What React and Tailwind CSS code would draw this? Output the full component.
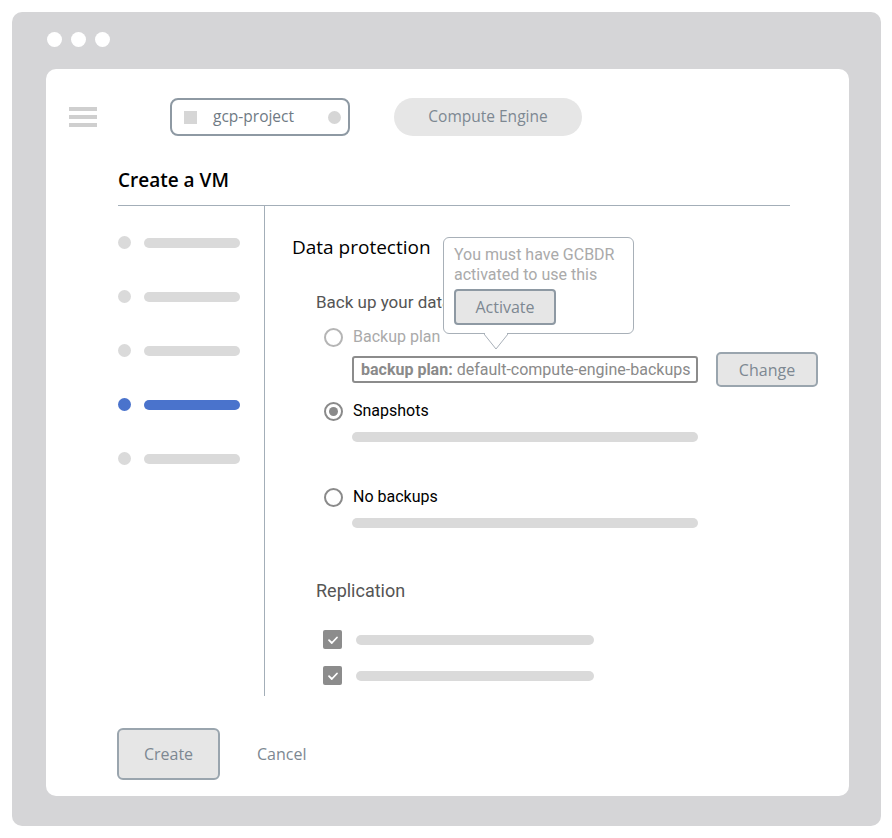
import React from "react";

const G = { fontFamily: "Roboto, 'Liberation Sans', sans-serif" };
const O = { fontFamily: "'Open Sans', Roboto, sans-serif" };

function Radio({ checked, faded }) {
  return (
    <span
      className={`flex h-[19px] w-[19px] items-center justify-center rounded-full border-2 ${
        faded ? "border-[#b5b5b5]" : "border-[#8a8a8a]"
      }`}
    >
      {checked && <span className="h-[9px] w-[9px] rounded-full bg-[#8a8a8a]" />}
    </span>
  );
}

function Check() {
  return (
    <span className="flex h-[19px] w-[19px] items-center justify-center rounded-[2px] bg-[#8c8c8c]">
      <svg width="12" height="12" viewBox="0 0 12 12" fill="none">
        <path d="M2 6.2 L4.8 9 L10 3.5" stroke="white" strokeWidth="1.8" strokeLinecap="round" strokeLinejoin="round" />
      </svg>
    </span>
  );
}

export default function App() {
  const steps = [false, false, false, true, false];
  return (
    <div className="h-[838px] w-[892px] bg-white p-[12px]" style={G}>
      <div className="flex h-[814px] w-[869px] flex-col rounded-[10px] bg-[#d5d5d7]">
        <div className="flex h-[57px] items-center gap-[9px] pl-[35px] pb-[2px]">
          <span className="h-[15px] w-[15px] rounded-full bg-white" />
          <span className="h-[15px] w-[15px] rounded-full bg-white" />
          <span className="h-[15px] w-[15px] rounded-full bg-white" />
        </div>
        <div className="ml-[34px] flex h-[727px] w-[803px] flex-col rounded-[10px] bg-white">
          {/* header */}
          <div className="flex items-center pt-[29px] pl-[23px]">
            <div className="flex w-[28px] flex-col gap-[4px]">
              <span className="h-[4px] bg-[#cfcfcf]" />
              <span className="h-[4px] bg-[#cfcfcf]" />
              <span className="h-[4px] bg-[#cfcfcf]" />
            </div>
            <div className="ml-[73px] flex h-[38px] w-[180px] items-center rounded-[8px] border-2 border-[#8e99a3] pl-[12px] pr-[7px]">
              <span className="h-[13px] w-[13px] bg-[#d6d6d6]" />
              <span className="ml-[16px] text-[15.5px] text-[#6f7a84]" style={O}>gcp-project</span>
              <span className="ml-auto h-[13px] w-[13px] rounded-full bg-[#d6d6d6]" />
            </div>
            <div className="ml-[44px] flex h-[38px] w-[188px] items-center justify-center rounded-full bg-[#e6e6e6] text-[15.5px] text-[#7d8892]" style={O}>
              Compute Engine
            </div>
          </div>
          <div className="ml-[72px] mt-[32px] text-[19px] font-semibold leading-[24px] text-black" style={O}>Create a VM</div>
          <div className="ml-[72px] mt-[13px] h-[1px] w-[672px] bg-[#a3aeb8]" />
          {/* body */}
          <div className="ml-[72px] flex h-[490px]">
            <div className="flex w-[146px] flex-col gap-[41px] pt-[30px]">
              {steps.map((a, i) => (
                <div key={i} className="flex items-center">
                  <span className={`h-[13px] w-[13px] rounded-full ${a ? "bg-[#4a73cc]" : "bg-[#dadada]"}`} />
                  <span className={`ml-[13px] h-[10px] w-[96px] rounded-full ${a ? "bg-[#4a73cc]" : "bg-[#dadada]"}`} />
                </div>
              ))}
            </div>
            <div className="relative flex-1 border-l border-[#a3aeb8] pl-[27px]">
              <div className="mt-[28px] text-[19px] leading-[26px] text-black" style={O}>Data protection</div>
              <div className="ml-[24px] mt-[30px] text-[17px] leading-[24px] text-[#555]">Back up your data</div>
              <div className="ml-[32px] mt-[13px] flex items-center gap-[10px]">
                <Radio faded />
                <span className="text-[16px] leading-[20px] text-[#aaaaaa]">Backup plan</span>
              </div>
              <div className="ml-[60px] mt-[5px] flex items-center">
                <div className="flex h-[27px] w-[346px] items-center rounded-[3px] border-2 border-[#8c8c8c] pl-[7px] text-[16px] text-[#8a8a8a] whitespace-nowrap">
                  <span className="font-bold">backup plan:</span>
                  <span className="ml-[4px]">default-compute-engine-backups</span>
                </div>
                <div className="ml-[18px] flex h-[35px] w-[102px] items-center justify-center rounded-[5px] border-2 border-[#9aa5ae] bg-[#e6e6e6] text-[16px] text-[#7d8892]" style={O}>
                  Change
                </div>
              </div>
              <div className="ml-[32px] mt-[14px] flex items-center gap-[10px]">
                <Radio checked />
                <span className="text-[16px] leading-[20px] text-black">Snapshots</span>
              </div>
              <div className="ml-[60px] mt-[11px] h-[10px] w-[346px] rounded-full bg-[#dadada]" />
              <div className="ml-[32px] mt-[45px] flex items-center gap-[10px]">
                <Radio />
                <span className="text-[16px] leading-[20px] text-black">No backups</span>
              </div>
              <div className="ml-[60px] mt-[11px] h-[10px] w-[346px] rounded-full bg-[#dadada]" />
              <div className="ml-[24px] mt-[51px] text-[18px] leading-[24px] text-[#555]">Replication</div>
              <div className="ml-[31px] mt-[27px] flex items-center">
                <Check />
                <span className="ml-[14px] h-[10px] w-[238px] rounded-full bg-[#dadada]" />
              </div>
              <div className="ml-[31px] mt-[17px] flex items-center">
                <Check />
                <span className="ml-[14px] h-[10px] w-[238px] rounded-full bg-[#dadada]" />
              </div>

              {/* tooltip */}
              <div className="absolute left-[178px] top-[31px] h-[97px] w-[191px] rounded-[6px] border border-[#a8b0b8] bg-white px-[10px] pt-[7px]">
                <div className="text-[16px] leading-[20px] text-[#aaaaaa]">
                  You must have GCBDR
                  <br />
                  activated to use this
                </div>
                <div className="mt-[4px] flex h-[36px] w-[102px] items-center justify-center rounded-[4px] border-2 border-[#8e99a3] bg-[#e6e6e6] text-[16px] text-[#7d8892]" style={O}>
                  Activate
                </div>
                <svg className="absolute left-[40px] top-[95px]" width="24" height="18" viewBox="0 0 24 18">
                  <path d="M0 1 L12 16 L24 1" fill="white" stroke="#a8b0b8" strokeWidth="1" />
                  <rect x="1" y="0" width="22" height="1.5" fill="white" />
                </svg>
              </div>
            </div>
          </div>
          {/* footer */}
          <div className="ml-[71px] mt-[32px] flex items-center">
            <div className="flex h-[52px] w-[103px] items-center justify-center rounded-[6px] border-2 border-[#9aa5ae] bg-[#e6e6e6] text-[16px] text-[#7d8892]" style={O}>
              Create
            </div>
            <span className="ml-[37px] text-[16px] text-[#7d8892]" style={O}>Cancel</span>
          </div>
        </div>
      </div>
    </div>
  );
}
